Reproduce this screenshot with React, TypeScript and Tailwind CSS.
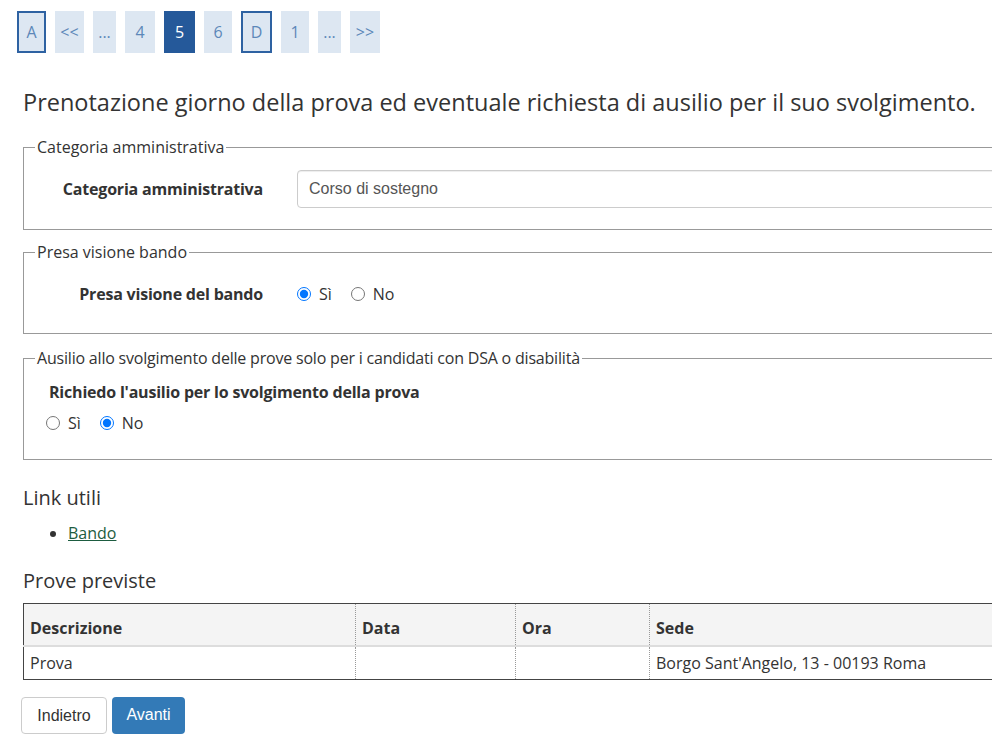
import React from "react";

const pages = [
  { label: "A", w: "w-[29px]", kind: "outlined" },
  { label: "<<", w: "w-[29px]", kind: "plain" },
  { label: "...", w: "w-[23px]", kind: "plain" },
  { label: "4", w: "w-[30px]", kind: "plain" },
  { label: "5", w: "w-[31px]", kind: "active" },
  { label: "6", w: "w-[28px]", kind: "plain" },
  { label: "D", w: "w-[31px]", kind: "outlined" },
  { label: "1", w: "w-[28px]", kind: "plain" },
  { label: "...", w: "w-[23px]", kind: "plain" },
  { label: ">>", w: "w-[30px]", kind: "plain" },
];

function Pager() {
  return (
    <div className="flex gap-[9px] ml-[17px] h-[42px]">
      {pages.map((p, i) => {
        let cls = "bg-[#dde7f2] text-[#5c87b9]";
        if (p.kind === "outlined") cls = "bg-[#dde7f2] text-[#5c87b9] border-2 border-[#2e62a2]";
        if (p.kind === "active") cls = "bg-[#25599a] text-white";
        return (
          <span
            key={i}
            className={`${p.w} ${cls} h-[42px] flex items-center justify-center text-[16px] ${p.label === "..." ? "text-[12px]" : ""}`}
          >
            {p.label}
          </span>
        );
      })}
    </div>
  );
}

function Radio({ checked }: { checked?: boolean }) {
  return (
    <input
      type="radio"
      readOnly
      checked={!!checked}
      className="m-0 w-[14px] h-[14px] accent-[#0075ff]"
    />
  );
}

function Legend({ children }: { children: React.ReactNode }) {
  return <legend className="px-[2px] text-[16px] leading-6 text-[#333]">{children}</legend>;
}

export default function App() {
  return (
    <div className="w-[992px] h-[746px] overflow-hidden bg-white font-['Open_Sans',sans-serif] text-[#333]">
      <div className="w-[1200px] pt-[11px]">
        <Pager />

        <div className="ml-[23px]">
          <h1 className="mt-[37px] text-[23.5px] leading-6 font-normal">
            Prenotazione giorno della prova ed eventuale richiesta di ausilio per il suo svolgimento.
          </h1>

          <fieldset className="mt-[21px] border border-[#999] pl-[11px] pt-[11px] pb-[21px]">
            <Legend>Categoria amministrativa</Legend>
            <div className="flex items-center h-[38px]">
              <label className="w-[228px] text-right font-bold text-[16px] tracking-[-0.2px]">Categoria amministrativa</label>
              <div className="ml-[34px] w-[800px] h-[38px] border border-[#ccc] rounded-[4px] shadow-[inset_0_1px_1px_rgba(0,0,0,0.075)] flex items-center px-[11px] font-['Liberation_Sans',Arial,sans-serif] text-[16px] text-[#555]">
                Corso di sostegno
              </div>
            </div>
          </fieldset>

          <fieldset className="mt-[10px] border border-[#999] pl-[11px] pt-[11px] pb-[20px]">
            <Legend>Presa visione bando</Legend>
            <div className="flex items-center h-[38px]">
              <label className="w-[228px] text-right font-bold text-[16px] tracking-[-0.2px]">Presa visione del bando</label>
              <div className="ml-[34px] flex items-center text-[16px]">
                <Radio checked />
                <span className="ml-[8px]">Sì</span>
                <span className="ml-[19px] flex items-center">
                  <Radio />
                </span>
                <span className="ml-[8px]">No</span>
              </div>
            </div>
          </fieldset>

          <fieldset className="mt-[12px] border border-[#999] pl-[22px] pt-[10px] pb-[24px]">
            <legend className="-ml-[11px] px-[2px] text-[16px] leading-6 text-[#333] tracking-[-0.2px]">
              Ausilio allo svolgimento delle prove solo per i candidati con DSA o disabilità
            </legend>
            <div className="ml-[3px] font-bold text-[16px] leading-6 tracking-[-0.2px]">
              Richiedo l'ausilio per lo svolgimento della prova
            </div>
            <div className="mt-[7px] flex items-center h-6 text-[16px]">
              <Radio />
              <span className="ml-[8px]">Sì</span>
              <span className="ml-[19px] flex items-center">
                <Radio checked />
              </span>
              <span className="ml-[8px]">No</span>
            </div>
          </fieldset>

          <h2 className="mt-[26px] text-[20px] leading-6 font-normal">Link utili</h2>
          <ul className="mt-[11px] list-disc pl-[45px] text-[16px] leading-6">
            <li>
              <a href="#" className="text-[#1d5c40] underline">Bando</a>
            </li>
          </ul>

          <h2 className="mt-[24px] text-[20px] leading-6 font-normal">Prove previste</h2>

          <table className="mt-[10px] w-[1100px] border-collapse border-t border-l border-b border-[#444] text-[16px] table-fixed">
            <thead>
              <tr className="bg-[#f4f4f4] h-[42px] border-b-2 border-[#ddd]">
                <th className="w-[332px] text-left align-bottom font-bold px-[6px] pb-[5px] border-r border-dotted border-[#999]">Descrizione</th>
                <th className="w-[160px] text-left align-bottom font-bold px-[6px] pb-[5px] border-r border-dotted border-[#999]">Data</th>
                <th className="w-[134px] text-left align-bottom font-bold px-[6px] pb-[5px] border-r border-dotted border-[#999]">Ora</th>
                <th className="text-left align-bottom font-bold px-[6px] pb-[5px]">Sede</th>
              </tr>
            </thead>
            <tbody>
              <tr className="h-[34px]">
                <td className="px-[6px] border-r border-dotted border-[#999]">Prova</td>
                <td className="px-[6px] border-r border-dotted border-[#999]"></td>
                <td className="px-[6px] border-r border-dotted border-[#999]"></td>
                <td className="px-[6px]">Borgo Sant'Angelo, 13 - 00193 Roma</td>
              </tr>
            </tbody>
          </table>
        </div>

        <div className="mt-[17px] ml-[21px] flex gap-[5px] font-['Liberation_Sans',Arial,sans-serif] text-[16px]">
          <button className="w-[86px] h-[37px] border border-[#ccc] rounded-[4px] bg-white text-[#333]">Indietro</button>
          <button className="w-[73px] h-[37px] rounded-[4px] bg-[#337ab7] text-white pb-[2px]">Avanti</button>
        </div>
      </div>
    </div>
  );
}
